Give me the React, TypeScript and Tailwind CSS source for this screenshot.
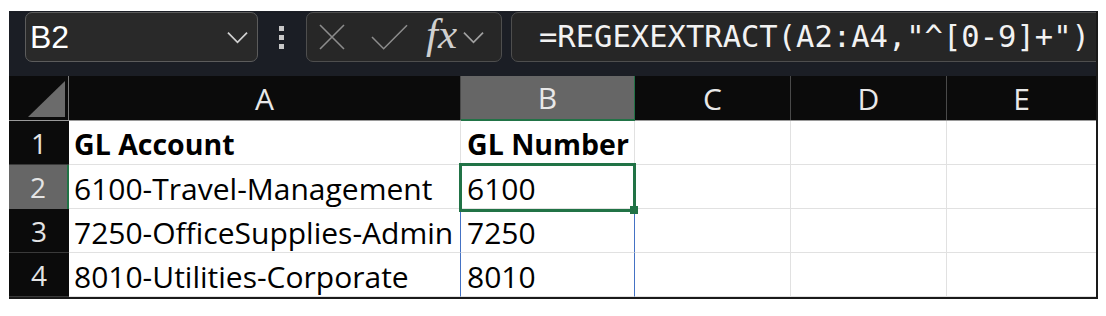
const cellFont = "font-['Open_Sans',_'Noto_Sans',_sans-serif]";

const rows = [
  { n: "1", a: "GL Account", b: "GL Number", bold: true },
  { n: "2", a: "6100-Travel-Management", b: "6100" },
  { n: "3", a: "7250-OfficeSupplies-Admin", b: "7250" },
  { n: "4", a: "8010-Utilities-Corporate", b: "8010" },
];

function Chevron({ className }: { className?: string }) {
  return (
    <svg viewBox="0 0 22 13" className={className} fill="none">
      <path d="M1 1.5 L11 11.5 L21 1.5" stroke="currentColor" strokeWidth="1.8" />
    </svg>
  );
}

function Toolbar() {
  return (
    <div className="h-[65px] flex items-start pt-[1px] pl-[16px] shrink-0">
      {/* name box */}
      <div className="w-[233px] h-[50px] rounded-[7px] border border-[#5c5c5c] bg-[#292929] flex items-center pl-[4px] pr-[9px]">
        <span className="flex-1 text-[32px] leading-none text-white font-['Liberation_Sans',_Arial,_sans-serif]">B2</span>
        <Chevron className="w-[21px] h-[13px] text-[#d0d0d0]" />
      </div>

      {/* dots */}
      <div className="w-[48px] h-[50px] flex flex-col items-center justify-center gap-[4px] pr-[1px]">
        <div className="w-[5px] h-[5px] bg-[#c8c8c8]" />
        <div className="w-[5px] h-[5px] bg-[#c8c8c8]" />
        <div className="w-[5px] h-[5px] bg-[#c8c8c8]" />
      </div>

      {/* function buttons */}
      <div className="w-[196px] h-[50px] rounded-[7px] border border-[#4e4e4e] bg-[#272727] flex items-center pl-[12px]">
        <svg viewBox="0 0 26 26" className="w-[26px] h-[26px] text-[#8c8c8c]" fill="none">
          <path d="M1 1 L25 25 M25 1 L1 25" stroke="currentColor" strokeWidth="1.6" />
        </svg>
        <svg viewBox="0 0 38 26" className="w-[37px] h-[26px] ml-[26px] text-[#8c8c8c]" fill="none">
          <path d="M1 13 L13 25 L37 1" stroke="currentColor" strokeWidth="1.6" />
        </svg>
        <span className="ml-[18px] text-[43px] leading-none italic text-[#cfcfcf] font-['Liberation_Serif',_'DejaVu_Serif',_serif] -mt-[8px]">fx</span>
        <Chevron className="ml-[6px] w-[21px] h-[13px] text-[#a0a0a0]" />
      </div>

      {/* formula */}
      <div className="ml-[9px] flex-1 -mr-[8px] h-[50px] rounded-[7px] border border-[#4e4e4e] bg-[#262626] flex items-center pl-[27px] overflow-hidden">
        <span className="text-[30.5px] leading-none text-[#f2f2f2] whitespace-nowrap font-['DejaVu_Sans_Mono',_'Liberation_Mono',_monospace]">
          =REGEXEXTRACT(A2:A4,"^[0-9]+")
        </span>
      </div>
    </div>
  );
}

function Header() {
  const cols = ["A", "B", "C", "D", "E"];
  return (
    <div className="grid grid-cols-[60px_392px_174px_156px_156px_149px] h-[45px] bg-[#0b0b0b] border-b border-[#9a9a9a] shrink-0">
      <div className="border-r border-[#7a7a7a] flex items-end justify-end pr-[3px] pb-[3px]">
        <svg viewBox="0 0 37 36" className="w-[37px] h-[36px]">
          <path d="M37 0 L37 36 L0 36 Z" fill="#6b6b6b" />
        </svg>
      </div>
      {cols.map((c, i) => (
        <div
          key={c}
          className={
            "flex items-center justify-center text-[30px] leading-none text-[#e8e8e8] pt-[1px] " +
            (i === 1 ? "bg-[#666666] border-b-[2px] border-[#217346] -mb-px " : "") +
            (i < 4 ? "border-r border-[#4a4a4a] " : "") +
            "font-['Open_Sans',_'Noto_Sans',_sans-serif]"
          }
        >
          {c}
        </div>
      ))}
    </div>
  );
}

function Grid() {
  return (
    <div className="flex flex-col">
      {rows.map((r, ri) => {
        const sel = ri === 1;
        const spill = ri >= 2;
        const size = r.bold ? " text-[28.5px] font-bold" : " text-[30px]";
        return (
          <div key={r.n} className="grid grid-cols-[60px_392px_174px_156px_156px_149px] h-[44px]">
            <div
              className={
                "flex items-center justify-center text-[28px] leading-none text-[#e4e4e4] font-['Open_Sans',_'Noto_Sans',_sans-serif] " +
                (sel ? "bg-[#666666] border-r-[2px] border-[#217346]" : "bg-[#0b0b0b] border-b border-[#3a3a3a]")
              }
            >
              {r.n}
            </div>
            <div className={"bg-white border-r border-b border-[#e1e1e1] flex items-center pl-[5px] pt-[4px] leading-none text-black whitespace-nowrap overflow-hidden " + cellFont + size}>
              {r.a}
            </div>
            <div
              className={
                "relative bg-white border-b flex items-center pl-[6px] pt-[4px] leading-none text-black whitespace-nowrap " +
                cellFont +
                size +
                (spill ? " border-l border-r border-l-[#4472c4] border-r-[#4472c4] border-b-[#e1e1e1] -ml-px" : " border-r border-[#e1e1e1]")
              }
            >
              {r.b}
              {sel && (
                <div className="absolute z-10 -left-[2px] -top-[2px] w-[177px] h-[49px] border-[3px] border-[#217346]">
                  <div className="absolute -right-[5px] -bottom-[5px] w-[8px] h-[8px] bg-[#217346]" />
                </div>
              )}
            </div>
            <div className="bg-white border-r border-b border-[#e1e1e1]" />
            <div className="bg-white border-r border-b border-[#e1e1e1]" />
            <div className="bg-white border-b border-[#e1e1e1]" />
          </div>
        );
      })}
    </div>
  );
}

export default function App() {
  return (
    <div className="w-[1106px] h-[316px] bg-white pt-[11px] pl-[9px]">
      <div className="w-[1089px] flex flex-col bg-[#1b1e25] overflow-hidden border-r-2 border-b-2 border-[#1a1a1a]">
        <Toolbar />
        <Header />
        <Grid />
      </div>
    </div>
  );
}
